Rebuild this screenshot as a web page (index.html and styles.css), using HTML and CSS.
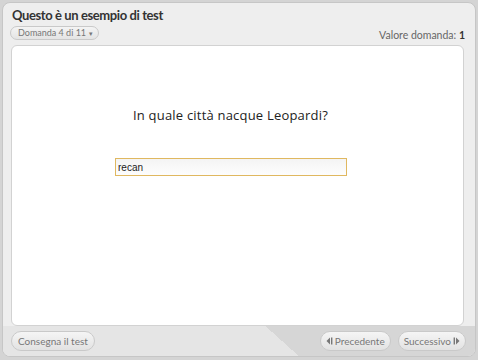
FILE: index.html
```html
<!DOCTYPE html>
<html lang="it">

<head>
  <meta charset="UTF-8">
  <meta name="viewport" content="width=device-width, initial-scale=1.0">
  <title>Questo è un esempio di test</title>
  <link rel="stylesheet" href="styles.css">
</head>

<body>
  <div class="quiz">
    <header class="quiz-head">
      <h1 class="title">Questo è un esempio di test</h1>
      <div class="head-row">
        <span class="pill">Domanda 4 di 11 <span class="caret">▾</span></span>
        <span class="points">Valore domanda: <b>1</b></span>
      </div>
    </header>

    <main class="panel">
      <p class="question">In quale città nacque Leopardi?</p>
      <input class="answer" type="text" value="recan">
    </main>

    <footer class="quiz-foot">
      <button class="btn">Consegna il test</button>
      <div class="nav">
        <button class="btn">
          <svg class="ico" width="7" height="8" viewBox="0 0 7 8"><polygon points="4,0.5 4,7.5 0.5,4" /><rect x="5" y="0.5" width="1.4" height="7" /></svg>Precedente
        </button>
        <button class="btn">
          Successivo<svg class="ico" width="7" height="8" viewBox="0 0 7 8"><rect x="0.6" y="0.5" width="1.4" height="7" /><polygon points="3,0.5 3,7.5 6.5,4" /></svg>
        </button>
      </div>
    </footer>
  </div>
</body>

</html>
```

FILE: styles.css
```css
body {
  margin: 0;
  background: #d4d4d4;
  font-family: Lato, "Open Sans", sans-serif;
}

/* cornice esterna */
.quiz {
  box-sizing: border-box;
  margin: 2px 2px 0 2px;
  width: 474px;
  height: 355px;
  border: 1px solid #c6c6c6;
  border-radius: 8px;
  background: #eeeeee;
  display: flex;
  flex-direction: column;
  overflow: hidden;
}

.quiz-head {
  padding: 3px 10px 0 9px;
}

.title {
  margin: 0;
  font-size: 13px;
  font-weight: 700;
  letter-spacing: -0.4px;
  color: #333;
  line-height: 18px;
}

.head-row {
  display: flex;
  justify-content: space-between;
  align-items: center;
  margin-top: 1px;
  height: 16px;
}

.pill {
  box-sizing: border-box;
  height: 14px;
  margin-left: -2px;
  padding: 0 5px 0 7px;
  border: 1px solid #c9c9c9;
  border-radius: 8px;
  background: linear-gradient(#f4f4f4, #e4e4e4);
  font-size: 9px;
  line-height: 12px;
  color: #777;
}

.caret {
  font-size: 7px;
  margin-left: 1px;
}

.points {
  font-size: 10.5px;
  color: #666;
  padding-top: 3px;
}

.points b {
  color: #333;
}

/* area bianca della domanda */
.panel {
  box-sizing: border-box;
  margin: 4px 11px 0 8px;
  padding-right: 14px;
  height: 281px;
  background: #fff;
  border: 1px solid #d2d2d2;
  border-radius: 6px;
  display: flex;
  flex-direction: column;
  align-items: center;
}

.question {
  margin: 60px 0 0 0;
  font-family: "Open Sans", sans-serif;
  font-size: 13px;
  color: #222;
  letter-spacing: 0.2px;
}

.answer {
  box-sizing: border-box;
  margin-top: 34px;
  margin-left: 1px;
  width: 232px;
  height: 18px;
  padding: 0 2px;
  border: 1px solid #e0b860;
  background: linear-gradient(#f4f4f4, #fdfdfd);
  font-family: "Liberation Sans", Arial, sans-serif;
  font-size: 10px;
  color: #222;
  outline: none;
}

/* barra in basso con la diagonale */
.quiz-foot {
  flex: 1;
  display: flex;
  justify-content: space-between;
  align-items: center;
  padding: 0 9px 0 8px;
  background: linear-gradient(42deg, #e5e5e5 58.5%, #d6d6d6 58.5%);
}

.nav {
  display: flex;
  gap: 7px;
}

.btn {
  box-sizing: border-box;
  display: flex;
  align-items: center;
  gap: 2px;
  height: 20px;
  padding: 0 6px;
  border: 1px solid #c9c9c9;
  border-radius: 10px;
  background: linear-gradient(#f5f5f5, #e2e2e2);
  font-family: inherit;
  font-size: 10px;
  color: #777;
  cursor: pointer;
}

.nav .btn {
  padding: 0 5px;
}

.ico {
  fill: #777;
}
```
